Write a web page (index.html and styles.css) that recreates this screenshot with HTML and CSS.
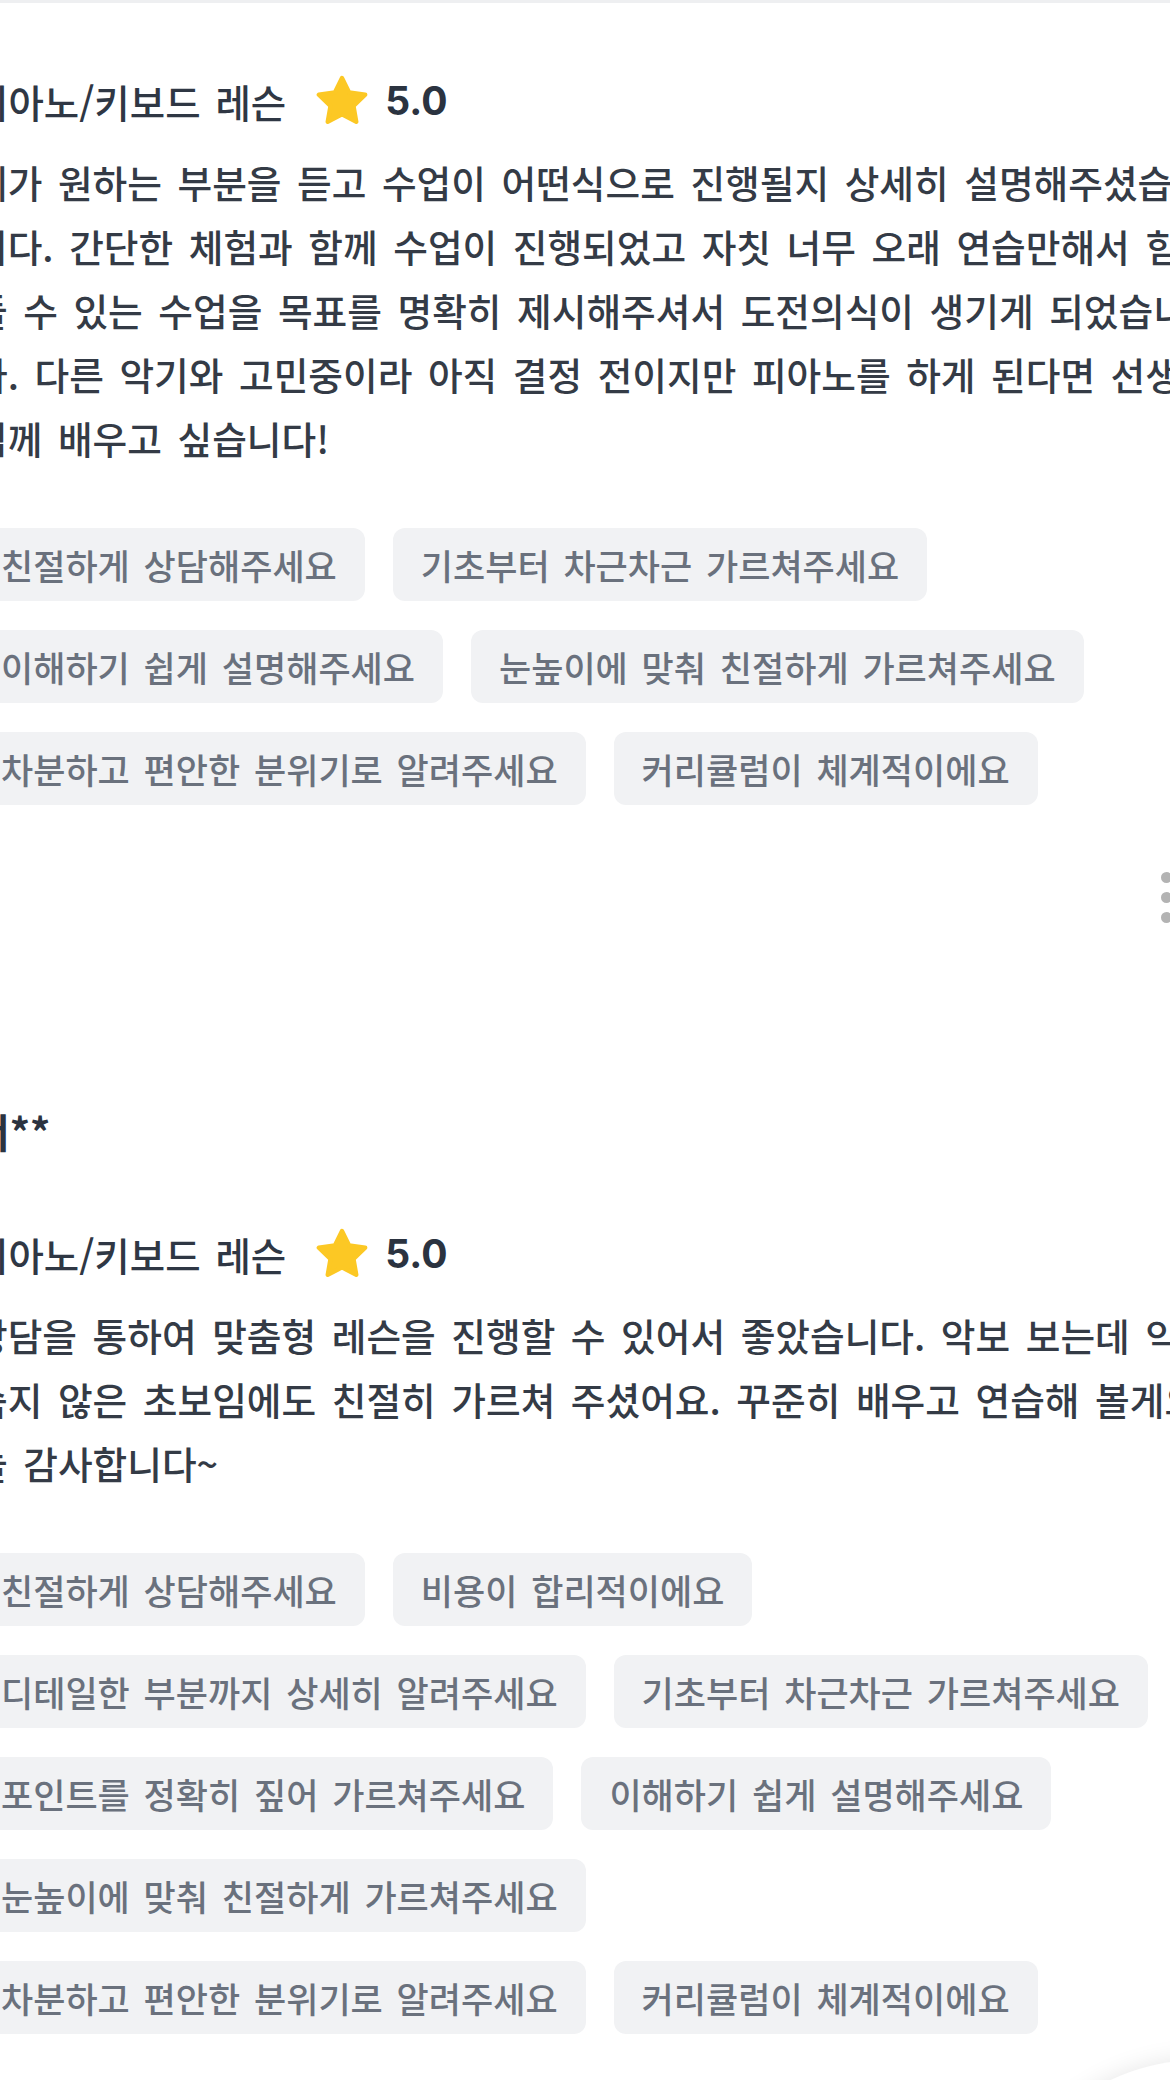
FILE: index.html
```html
<!DOCTYPE html>
<html lang="ko">
<head>
<meta charset="utf-8">
<title>리뷰</title>
<link rel="stylesheet" href="styles.css">
</head>
<body>
<div class="topbar"></div>
<main class="reviews">
  <article class="review first">
    <div class="meta">
      <span class="service">피아노/키보드 레슨</span>
      <span class="rating">
        <svg class="star" viewBox="0 0 24 24" aria-hidden="true"><path d="M12 1.4L15.29 8.07L22.7 9.1L17.33 14.33L18.6 21.6L12 18.2L5.4 21.6L6.67 14.33L1.3 9.1L8.71 8.07Z"/></svg>
        <b class="score">5.0</b>
      </span>
    </div>
    <p class="text">제가 원하는 부분을 듣고 수업이 어떤식으로 진행될지 상세히 설명해주셨습<br>니다. 간단한 체험과 함께 수업이 진행되었고 자칫 너무 오래 연습만해서 힘<br>들 수 있는 수업을 목표를 명확히 제시해주셔서 도전의식이 생기게 되었습니<br>다. 다른 악기와 고민중이라 아직 결정 전이지만 피아노를 하게 된다면 선생<br>님께 배우고 싶습니다!</p>
    <ul class="tags">
      <li>친절하게 상담해주세요</li>
      <li>기초부터 차근차근 가르쳐주세요</li>
      <li>이해하기 쉽게 설명해주세요</li>
      <li>눈높이에 맞춰 친절하게 가르쳐주세요</li>
      <li>차분하고 편안한 분위기로 알려주세요</li>
      <li>커리큘럼이 체계적이에요</li>
    </ul>
  </article>

  <div class="more-row">
    <span class="kebab" aria-label="더보기"><i></i><i></i><i></i></span>
  </div>

  <article class="review second">
    <div class="name">서**</div>
    <div class="meta">
      <span class="service">피아노/키보드 레슨</span>
      <span class="rating">
        <svg class="star" viewBox="0 0 24 24" aria-hidden="true"><path d="M12 1.4L15.29 8.07L22.7 9.1L17.33 14.33L18.6 21.6L12 18.2L5.4 21.6L6.67 14.33L1.3 9.1L8.71 8.07Z"/></svg>
        <b class="score">5.0</b>
      </span>
    </div>
    <p class="text">상담을 통하여 맞춤형 레슨을 진행할 수 있어서 좋았습니다. 악보 보는데 익<br>숙지 않은 초보임에도 친절히 가르쳐 주셨어요. 꾸준히 배우고 연습해 볼게요.<br>늘 감사합니다~</p>
    <ul class="tags">
      <li>친절하게 상담해주세요</li>
      <li>비용이 합리적이에요</li>
      <li>디테일한 부분까지 상세히 알려주세요</li>
      <li>기초부터 차근차근 가르쳐주세요</li>
      <li>포인트를 정확히 짚어 가르쳐주세요</li>
      <li>이해하기 쉽게 설명해주세요</li>
      <li>눈높이에 맞춰 친절하게 가르쳐주세요</li>
      <li>차분하고 편안한 분위기로 알려주세요</li>
      <li>커리큘럼이 체계적이에요</li>
    </ul>
  </article>
</main>
<div class="fab"></div>
</body>
</html>
```

FILE: styles.css
```css
* { box-sizing: border-box; }

html, body {
  margin: 0;
  padding: 0;
  background: #ffffff;
  overflow: hidden;
}

body {
  width: 1170px;
  height: 2080px;
  font-family: "Noto Sans CJK KR", "Noto Sans", sans-serif;
  color: #343b46;
}

.topbar {
  height: 3px;
  background: #eeeff1;
}

.reviews {
  margin-left: -27px;
  width: 1236px;
  padding-top: 73px;
}

.review {
  display: flex;
  flex-direction: column;
}

.meta {
  display: flex;
  align-items: center;
  height: 50px;
}

.service {
  font-size: 38.5px;
  font-weight: 500;
  line-height: 50px;
  color: #2f3744;
  word-spacing: 4px;
  white-space: nowrap;
}

.rating {
  display: flex;
  align-items: center;
  margin-left: 30px;
}

.star {
  width: 52px;
  height: 52px;
  fill: #fcc824;
  stroke: #fcc824;
  stroke-width: 2;
  stroke-linejoin: round;
}

.score {
  margin-left: 17px;
  font-family: "Inter", "Noto Sans", sans-serif;
  font-weight: 700;
  font-size: 39px;
  line-height: 50px;
  color: #2b3340;
}

.text {
  margin: 24px 0 0;
  font-size: 37.7px;
  font-weight: 500;
  line-height: 64px;
  word-spacing: 5px;
  color: #343b46;
  white-space: nowrap;
}

.tags {
  list-style: none;
  margin: 58px 0 0;
  padding: 0;
  display: flex;
  flex-wrap: wrap;
  gap: 29px 28px;
}

.tags li {
  height: 73px;
  display: flex;
  align-items: center;
  padding: 0 28px;
  border-radius: 12px;
  background: #f1f2f4;
  color: #6a717d;
  font-size: 35px;
  font-weight: 500;
  word-spacing: 4px;
  white-space: nowrap;
}

.more-row {
  display: flex;
  justify-content: flex-end;
  margin-top: 67px;
  padding-right: 37px;
}

.kebab {
  display: flex;
  flex-direction: column;
  gap: 9px;
}

.kebab i {
  display: block;
  width: 11px;
  height: 11px;
  border-radius: 50%;
  background: #b3b3b3;
}

.second {
  margin-top: 183px;
}

.name {
  font-size: 40px;
  line-height: 50px;
  font-weight: 700;
  color: #2b3340;
  margin-bottom: 73px;
}

.fab {
  position: fixed;
  left: 990px;
  top: 2060px;
  width: 420px;
  height: 420px;
  border-radius: 50%;
  background: #ffffff;
  box-shadow: 0 0 24px rgba(0, 0, 0, 0.10);
}
```
